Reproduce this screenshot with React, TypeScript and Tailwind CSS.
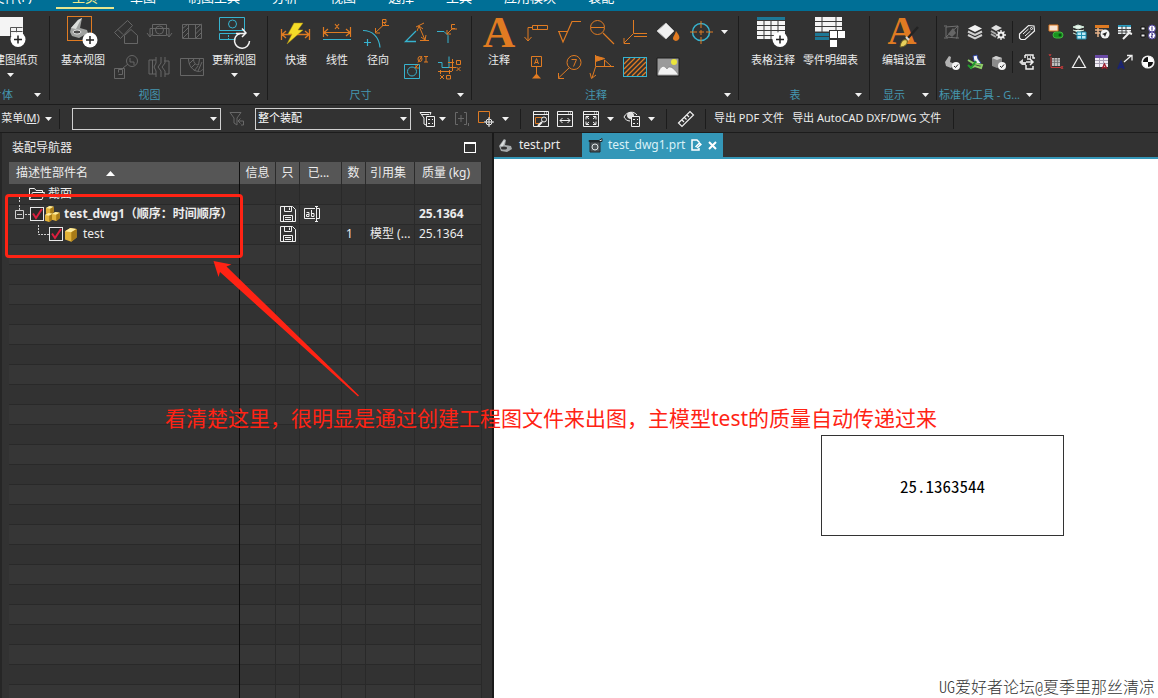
import React from "react";

const ORANGE = "#e07b22";
const TEAL = "#37b3cf";
const DIM = "#666666";

interface IconProps {
  size?: number;
  color?: string;
  children: React.ReactNode;
}

const Icon: React.FC<IconProps> = ({ size = 24, color = "#f0f0f0", children }) => (
  <svg
    width={size}
    height={size}
    viewBox={`0 0 ${size} ${size}`}
    fill="none"
    stroke={color}
    className="shrink-0 overflow-visible"
    aria-hidden="true"
  >
    {children}
  </svg>
);

const Caret = () => (
  <svg width="7" height="4" viewBox="0 0 7 4" className="shrink-0" aria-hidden="true">
    <path d="M0 0h7L3.5 4z" fill="#f2f2f2" />
  </svg>
);

const PlusBadge = ({ x, y }: { x: number; y: number }) => (
  <g>
    <circle cx={x} cy={y} r="7.5" fill="#fff" stroke="none" />
    <path d={`M${x - 4} ${y}h8M${x} ${y - 4}v8`} stroke="#222" strokeWidth="1.5" />
  </g>
);

/* ---------- large ribbon icons (32px) ---------- */

const NewSheetIcon = () => (
  <Icon size={32}>
    <rect x="0" y="1" width="28" height="19" fill="#f4f4f4" stroke="none" />
    <path d="M15.5 20v-8.500h12M15.500 15.500h12M21.500 12v8" stroke="#555" />
    <PlusBadge x={23} y={23.5} />
  </Icon>
);

const BaseViewIcon = () => (
  <Icon size={32}>
    <rect x="0.5" y="0.5" width="24" height="24" stroke={ORANGE} />
    <path d="M4 12L11 4l4-2-2 10 7 2 1 3-9 5-7-2-2-4z" fill="#9fa19f" stroke="none" />
    <path d="M4 12l7-8 4-2-3 5-3 6z" fill="#dcdedb" stroke="none" />
    <ellipse cx="10" cy="16" rx="4" ry="2" fill="#4a4a4a" stroke="#e4e4e4" />
    <PlusBadge x={23} y={24} />
  </Icon>
);

const UpdateViewIcon = () => (
  <Icon size={32} color={TEAL}>
    <path d="M1.500 1.500h25v13h-25zM1.500 17.500h19M1.500 17.500v6h16M20 17.500h6.500v-1" />
    <circle cx="14.500" cy="8" r="4" />
    <path d="M10.500 19v5" strokeDasharray="2 1" />
    <path d="M22 17.500a7.500 7.500 0 1 0 9.500 7.500" stroke="#f2f2f2" strokeWidth="1.5" />
    <path d="M18 17.500h10M24 12.500l4 4.500-4 4" stroke="#f2f2f2" strokeWidth="1.5" />
  </Icon>
);

const RapidIcon = () => (
  <Icon size={32} color={ORANGE}>
    <path d="M1.500 13v11M29.500 13v11M2 18.500h27M6 15l-4 3.500L6 22M25 15l4 3.500-4 3.500" strokeWidth="1.3" />
    <path d="M14 7h9l-5 7h5L7 28l5-10H8z" fill="#f4dc28" stroke="#a88a12" strokeWidth="0.5" />
  </Icon>
);

const LinearIcon = () => (
  <Icon size={32} color={ORANGE}>
    <path d="M2.500 11v10M29.500 11v10M3 16.500h26M7 13l-4 3.500L7 20M25 13l4 3.500-4 3.500M14 8l4 5M18 8l-4 5" strokeWidth="1.2" />
    <path d="M2 23.500h28" stroke={TEAL} />
  </Icon>
);

const RadialIcon = () => (
  <Icon size={32} color={ORANGE}>
    <path d="M1 14.500c9 0 16 6 17 17M2 26.500h7M5.500 23v7" stroke={TEAL} strokeWidth="1.2" />
    <path d="M13 17l8-7.500h6M13.500 12v5H18" />
    <path d="M20.500 10V3.500H24v3h-3.500M22 6.500l2.500 3.500" />
  </Icon>
);

const NoteIcon = () => (
  <Icon size={32}>
    <text
      x="16"
      y="31"
      textAnchor="middle"
      fontFamily="Liberation Serif, serif"
      fontWeight="700"
      fontSize="45"
      fill={ORANGE}
      stroke="none"
    >
      A
    </text>
  </Icon>
);

const TabularNoteIcon = () => (
  <Icon size={32}>
    <path d="M0 1h28v3H0z" fill="#1d7896" stroke="none" />
    <path d="M0 4h28v19H0z" fill="#f4f4f4" stroke="none" />
    <path d="M0 4.500h28M0 9.500h28M0 14.500h28M0 19.500h28M7 4v19M14 4v19M21 4v19" stroke="#3a3a3a" />
    <PlusBadge x={23} y={23.5} />
  </Icon>
);

const PartsListIcon = () => (
  <Icon size={32}>
    <path d="M0 1h27v15H0z" fill="#f4f4f4" stroke="none" />
    <path d="M0 17h27v7H0z" fill="#1d7896" stroke="none" />
    <path d="M0 5.500h27M0 10.500h27M0 16h27M0 20.500h27M7 1v15M21 1v15" stroke="#3a3a3a" />
    <path d="M14 14h17v10h-8v8h-9z" fill="#323232" stroke="none" />
    <path d="M15 15h7v7h-7zM23 15h7v7h-7zM15 24h7v7h-7z" fill="#fff" stroke="none" />
  </Icon>
);

const EditSettingsIcon = () => (
  <Icon size={32}>
    <text x="14" y="28" textAnchor="middle" fontFamily="Liberation Serif, serif" fontWeight="700" fontSize="40" fill={ORANGE} stroke="none">
      A
    </text>
    <path d="M30 11L19 23" stroke="#232323" strokeWidth="2.500" />
    <path d="M12 31c1-6 3-8 7-7 1 3-1 7-7 7z" fill="#e6cf5c" stroke="#6e6225" />
    <path d="M18 21l3 3" stroke="#d8d8d8" strokeWidth="2" />
  </Icon>
);

/* ---------- small ribbon icons (24px) ---------- */

const viewIcons: [string, React.ReactNode][] = [
  ["投影视图", (
    <Icon color={DIM}>
      <path d="M.5 12.500l13-12 5 5-12 13zM4 9.500l5 5M10.500 23.500v-8l6.500-6 6.500 6v8z" />
    </Icon>
  )],
  ["局部放大", (
    <Icon color={DIM}>
      <path d="M5.500 4.500h14v11h-14zM3 8.500h19M3 8.500v8M0 13l3 4 3-4M22 8.500v8M19 13l3 4 3-4" />
      <circle cx="12.500" cy="10" r="4" />
    </Icon>
  )],
  ["剖视图", (
    <Icon color={DIM}>
      <path d="M2.500 4.500h19v14h-19zM8.500 4.500v14M15.500 4.500v14M2 9l6-5M2 14l6-6M3 18l5-5M15.500 9l6-5M15.500 14l6-6M16 18l5-5" />
    </Icon>
  )],
  ["局部视图", (
    <Icon color={DIM}>
      <circle cx="18" cy="6" r="5.500" />
      <path d="M.5 13.500h10v10H.500zM4.500 17.500v-3h4v5h-4M9 13l5-4M16 3v4h4v3" />
    </Icon>
  )],
  ["断开视图", (
    <Icon color={DIM}>
      <path d="M9 2v6l-2 4 2 4v6M9 5H2v14h7M5.500 5v14M14 2v6l-3 4 3 4v6M18 2v6l-3 4 3 4v6M17 6h5v13h-4" />
    </Icon>
  )],
  ["局部剖", (
    <Icon color={DIM}>
      <path d="M.5 3.500h23v17H.500zM8.500 3.500c0 7 4 13 11 13 2 0 2-2 4-2M13.500 4c0 4 2 6 5 6l1-6M9 9l4-4M11 13l4-4M14 16l4-5M18 16l4-9" />
    </Icon>
  )],
];

const dimensionIcons: [string, React.ReactNode][] = [
  ["角度", (
    <Icon color={ORANGE}>
      <path d="M12 11L1.500 21.500H12" stroke={TEAL} strokeWidth="1.3" />
      <path d="M12 7l8-4M15 6l6 14M13 11l2-5 4 3M17 17l4 3 1-5M16 20.500h9" />
    </Icon>
  )],
  ["倒斜角", (
    <Icon color={ORANGE}>
      <path d="M0 11.500h7l4 4V23" stroke={TEAL} />
      <path d="M10 14l5-5h5M10 10v4h4M18 4.500h-3.500v4H18" />
    </Icon>
  )],
  ["孔标注", (
    <Icon color={ORANGE}>
      <path d="M.5 9.500h15v14H.500z" stroke={TEAL} />
      <circle cx="8" cy="16.500" r="4.500" stroke={TEAL} />
      <path d="M11 13l4-4M14 7.500L18 1M20 1.500h4M22 1v6M20 7h4M12 10v3h3" />
      <ellipse cx="16" cy="4" rx="2" ry="2.500" />
    </Icon>
  )],
  ["坐标", (
    <Icon color={ORANGE}>
      <path d="M1 7.500h4v5h7V1.500" stroke={TEAL} />
      <path d="M11 7.500h6M15.500 4v12M12 12.500h7M3.500 15v4M12.500 15v4M1 16.500h14M19.500 5.500h4v4h-4zM19.500 12l4 4M23.500 12l-4 4M3 20l4 4M7 20l-4 4M9.500 20.500h4v3.500h-4z" />
    </Icon>
  )],
];

const annotationIcons: [string, React.ReactNode][] = [
  ["特征控制框", (
    <Icon color={ORANGE}>
      <path d="M8.500 5.500h15v4h-15zM13.500 5.500v4M8 7.500H4v13M.500 17l3.500 4 3.500-4" />
    </Icon>
  )],
  ["表面粗糙度", (
    <Icon color={ORANGE}>
      <path d="M1 11.500h10M2 12l4 10 9-20.500h9" strokeWidth="1.2" />
    </Icon>
  )],
  ["剖切线", (
    <Icon color={ORANGE}>
      <circle cx="7.500" cy="7.500" r="7" />
      <path d="M1 7.500h13M13 13l11 11" strokeWidth="1.2" />
    </Icon>
  )],
  ["相交符号", (
    <Icon color={ORANGE}>
      <path d="M10.500 0v13.500H24M11 16.500h13M10 14L1 23M1 18v5.500h6" />
    </Icon>
  )],
  ["填充", (
    <Icon>
      <path d="M1 11l9-8 8 8-8 8z" fill="#f0f0f0" stroke="#bdbdbd" />
      <path d="M20 11c3 4 4 6 3 8-2 3-5 2-6 0 0-3 2-4 3-8z" fill={ORANGE} stroke="none" />
    </Icon>
  )],
  ["中心标记", (
    <Icon color={ORANGE}>
      <circle cx="12" cy="12" r="8.500" stroke={TEAL} strokeWidth="1.500" />
      <path d="M12 1v7M12 10v5M12 17v7M1 12h7M10 12h5M17 12h7" />
    </Icon>
  )],
  ["基准特征", (
    <Icon color={ORANGE}>
      <path d="M7.500 1.500h10v10h-10zM12.500 11.500V20M10.500 9l2-5.500 2 5.500M11 7.500h3" />
      <path d="M8 23.500l4.500-5 4.500 5z" fill={ORANGE} stroke="none" />
    </Icon>
  )],
  ["符号标注", (
    <Icon color={ORANGE}>
      <circle cx="17" cy="7.500" r="7" />
      <path d="M14.500 4.500h5l-3 7M12 13L1.500 23M1.500 18v5.500H7" />
    </Icon>
  )],
  ["焊接符号", (
    <Icon color={ORANGE}>
      <path d="M5.500 0v11.500H24M5.500 12L2 23M0 18l1.500 5.500L6 20M14.500 11V5l7 6.500" />
      <path d="M5.500 1l9 2.500-9 3z" fill={ORANGE} />
    </Icon>
  )],
  ["剖面线", (
    <Icon color={ORANGE}>
      <path d="M1 9l6-6M1 14L12 3M1 19L17 3M4 21L22 3M9 21L23 7M14 21l9-9M19 21l4-4" strokeWidth="1.300" />
      <rect x="0.500" y="2.500" width="23" height="19" stroke={TEAL} />
    </Icon>
  )],
  ["图像", (
    <Icon>
      <path d="M1 3h22v18H1z" fill="#9a9a9a" stroke="#1d1d1d" />
      <path d="M2 18c3-8 6-8 9-4 2-4 6-2 11 5v1H2z" fill="#f2f2f2" stroke="#777" strokeWidth="0.600" />
      <circle cx="18" cy="7" r="3" fill="#ece63c" stroke="none" />
    </Icon>
  )],
];

/* ---------- 16px icons ---------- */

const CheckDot = () => (
  <g>
    <circle cx="12" cy="12" r="4" fill="#f4f4f4" stroke="none" />
    <path d="M10 12l1.500 1.500 2.500-3" stroke="#222" />
  </g>
);

const standardIcons: [string, React.ReactNode][] = [
  ["草图", (
    <Icon size={16} color="#707070">
      <path d="M2 3l12-1-1 12-11-1zM2 13L14 2M0 2h3M0 14h4M12 14h3" />
      <path d="M4 10l5-6 3 5-4 4z" fill="#666" stroke="none" />
    </Icon>
  )],
  ["图层", (
    <Icon size={16}>
      <path d="M1 4.500L8 1l7 3.500L8 8z" fill="#f2f2f2" stroke="none" />
      <path d="M1 7.500l7 3.500 7-3.500M1 11l7 3.500 7-3.500" strokeWidth="2" stroke="#d0d0d0" />
    </Icon>
  )],
  ["图层设置", (
    <Icon size={16}>
      <path d="M1 4l5-3 6 3-6 3z" fill="#e0e0e0" stroke="none" />
      <path d="M1 7l5 3M1 10l5 3" strokeWidth="2" stroke="#aaa" />
      <circle cx="11" cy="11" r="2.500" strokeWidth="2" />
      <path d="M11 6v2M11 14v2M6 11h2M14 11h2M7.500 7.500l1.500 1.500M13 13l1.500 1.500M14.500 7.500L13 9M9 13l-1.500 1.500" strokeWidth="1.300" />
    </Icon>
  )],
  ["标签", (
    <Icon size={16}>
      <path d="M.500 10l9-8.500 5.500.500.500 5-9.500 8.500H2L.500 14z" strokeWidth="1.200" />
      <path d="M4 10l5.500-5M6 12l5.500-5" />
      <circle cx="12.500" cy="4.500" r="1" />
    </Icon>
  )],
  ["检查部件", (
    <Icon size={16}>
      <path d="M1 8l4-6 2 1-1 5 5 2-4 4-5-2z" fill="#b2b2b2" stroke="none" />
      <CheckDot />
    </Icon>
  )],
  ["检查工具", (
    <Icon size={16}>
      <path d="M6 2l4-1 1 4 3 4-3 1-4-3z" fill="#f4f4f4" stroke="#2a3f9c" />
      <path d="M1 6l5 3 9 2-1 3-6-2-5 2" fill="none" stroke="#8fd06a" strokeWidth="2" />
      <path d="M1 11l3 3 5-7" stroke="#1f9a2c" strokeWidth="2" />
    </Icon>
  )],
  ["检查装配", (
    <Icon size={16}>
      <path d="M2 4l4-2 6 2v8l-5 2-5-2z" fill="#8c8c8c" stroke="none" />
      <path d="M2 4l4-2 6 2-5 2z" fill="#d0d0d0" stroke="none" />
      <CheckDot />
    </Icon>
  )],
  ["导出列表", (
    <Icon size={16}>
      <path d="M6 1h8v3h2M6 1v3M14 12v3H7v-4M8 3h1M11 3h1M8 5h4" strokeWidth="1.500" />
      <path d="M0 8l4-3v3h3v3H3z" fill="#d8d8d8" stroke="none" />
      <path d="M7 8h7M11 5l3 3-3 3" strokeWidth="1.500" />
    </Icon>
  )],
];

const toolIcons: [string, React.ReactNode][] = [
  ["开关", (
    <Icon size={16}>
      <path d="M1 1h9v6H1z" fill="#f6e4d4" stroke={ORANGE} />
      <rect x="5" y="8" width="10" height="6" rx="3" fill="#18941f" stroke="#3fb43f" />
      <circle cx="12" cy="11" r="1.500" fill="#0b4a10" stroke="none" />
    </Icon>
  )],
  ["图层表", (
    <Icon size={16}>
      <path d="M2 3l5-2 6 2-6 2zM2 6l5 2 6-2M2 9l5 2" fill="#e9f6ee" stroke="#cfe8d8" />
      <path d="M6 8h9v7H6z" fill="#bdeaf6" stroke="#1b8fb0" />
      <path d="M6 11.500h9M10.500 8v7" stroke="#1b8fb0" />
    </Icon>
  )],
  ["表格导航", (
    <Icon size={16}>
      <path d="M1 1h14v3H1z" fill={ORANGE} stroke="none" />
      <path d="M1 6h8M1 9h5M4 4v9" stroke="#e8b48a" strokeWidth="1.500" />
      <circle cx="11" cy="10" r="4.500" fill="#f4f4f4" stroke="none" />
      <path d="M8 10l5-2-2 5-1-2z" fill="#222" stroke="none" />
    </Icon>
  )],
  ["表格工具", (
    <Icon size={16}>
      <path d="M1 1h13v9H1z" fill="#e9eef0" stroke="none" />
      <path d="M1 2h13" stroke="#2d9bbd" strokeWidth="2" />
      <path d="M1 5.500h13M1 8h13M5 2v8M9 2v8" stroke="#444" />
      <path d="M6 15l6-6M11 6l1 3 3 1" strokeWidth="2" />
    </Icon>
  )],
  ["编号", (
    <Icon size={16}>
      <path d="M1 3h4v3H1zM1 10h4v3H1z" fill="#eee" stroke="#111" />
      <circle cx="12" cy="4.500" r="3.500" fill="#fff" stroke="#4a3d9a" />
      <circle cx="12" cy="11.500" r="3.500" fill="#fff" stroke="#4a3d9a" />
      <path d="M12 2.500v4M11 10h2l-2 3h2" stroke="#2c2380" />
    </Icon>
  )],
  ["坐标网格", (
    <Icon size={16}>
      <path d="M4 4h8v8H4z" fill="#bdbdbd" stroke="none" />
      <path d="M4 6h8M4 8.500h8M6.500 4v8M9.500 4v8" stroke="#666" strokeWidth="0.700" />
      <path d="M3 3v10.500h10M1 0l1 2 1-2M13 12l2 3M15 12l-2 3" stroke="#c43a3a" />
    </Icon>
  )],
  ["三角", (
    <Icon size={16}>
      <path d="M8 2L1.500 13.500h13z" strokeWidth="1.200" />
    </Icon>
  )],
  ["表格标记", (
    <Icon size={16}>
      <path d="M1 1h13v12H1z" fill="#f2eef6" stroke="none" />
      <path d="M1 2.500h13" stroke="#6a4aa6" strokeWidth="3" />
      <path d="M1 6.500h13M1 9.500h13M5.500 4v9M9.500 4v9" stroke="#a8a0b4" />
      <path d="M8 15l2.500-5 2.500 5M9 13.500h3" stroke="#a01d2c" strokeWidth="1.300" />
    </Icon>
  )],
  ["文字引线", (
    <Icon size={16}>
      <path d="M7 8l7-6M10 1.500h5v5" strokeWidth="1.300" />
      <path d="M1 15l3-7 3 7M2 13h4" stroke="#1a2370" strokeWidth="2" />
    </Icon>
  )],
  ["质心", (
    <Icon size={16}>
      <circle cx="8" cy="8" r="6" fill="#fff" strokeWidth="1.200" />
      <path d="M8 8V3a5 5 0 0 0-5 5zM8 8v5a5 5 0 0 0 5-5z" fill="#111" stroke="none" />
    </Icon>
  )],
];

const FilterResetIcon = () => (
  <Icon size={16} color="#686868">
    <path d="M1 1.500h11L8 7v7l-3-2V7zM9 10h5.500v4H12M11.500 7.500L9 10l2.500 2.500" />
  </Icon>
);
const FilterListIcon = () => (
  <Icon size={16}>
    <path d="M1 1.500h11M1 1.500L5 7v6l2 1M12 1.500L11 4M3 3.500h7" />
    <path d="M7.500 5.500h8v10h-8zM9 8.500h2M9 12.500h2M13 8.500h1M13 12.500h1" />
  </Icon>
);
const ScopeIcon = () => (
  <Icon size={16} color="#686868">
    <path d="M4 1.500H1.500v12H4M10 1.500h2.500v12H10M7 4v7M4 7.500h6M14.500 12v3" />
  </Icon>
);
const SnapIcon = () => (
  <Icon size={16}>
    <path d="M11.500 7V.500h-11v11H6" stroke={ORANGE} />
    <circle cx="11" cy="11" r="3" />
    <path d="M11 6v10M6 11h10" />
  </Icon>
);
const WindowFrame = () => <path d="M.5.500h15v15H.500zM.500 3.500h15M11 2h1M13 2h1" />;
const ZoomWindowIcon = () => (
  <Icon size={16}>
    <WindowFrame />
    <path d="M9 6.500H2.500v6H7" stroke={ORANGE} />
    <circle cx="11" cy="8.500" r="2.500" />
    <path d="M9 11l-4 4" strokeWidth="2" />
  </Icon>
);
const PanIcon = () => (
  <Icon size={16}>
    <WindowFrame />
    <path d="M3 9.500h10M5.500 7L3 9.500 5.500 12M10.500 7L13 9.500 10.500 12" />
  </Icon>
);
const FitIcon = () => (
  <Icon size={16}>
    <WindowFrame />
    <path d="M3 8.500v-3h3M10 5.500h3v3M3 10.500v3h3M10 13.500h3v-3M3 5.500l3 2.500M13 5.500L10 8M3 13.500L6 11M13 13.500L10 11" />
  </Icon>
);
const ShowIcon = () => (
  <Icon size={16}>
    <path d="M0 6c3-6 10-6 13-2M0 6c1 2 3 4 6 4" />
    <circle cx="6.500" cy="4.500" r="3" fill="#ddd" />
    <path d="M7.500 5.500h8v10h-8z" fill="#323232" />
    <path d="M9 8.500h2M9 12.500h2M13 8.500h1M13 12.500h1" />
  </Icon>
);
const RulerIcon = () => (
  <Icon size={16}>
    <path d="M.5 12L12 .500 15.500 4 4 15.500zM4 9l2 2M6.500 6.500l2 2M9 4l2 2" strokeWidth="1.200" />
  </Icon>
);

const PartIcon = () => (
  <Icon size={16}>
    <path d="M1 9l5-7 2 1-1 5 6 1 1 3-5 3-6-1z" fill="#a6aaac" stroke="none" />
    <path d="M2 9l4-6 1 1-2 5z" fill="#dadddd" stroke="none" />
    <ellipse cx="6" cy="11" rx="3" ry="1.500" fill="#333" stroke="none" />
  </Icon>
);
const DrawingIcon = () => (
  <Icon size={16}>
    <path d="M2 5h10v10H2z" fill="#4f5558" stroke="#23292c" />
    <path d="M1 3.500h10l3-2v3H1z" fill="#dfe5e6" stroke="#23292c" />
    <circle cx="7" cy="10" r="3" stroke="#dfe5e6" />
  </Icon>
);
const FolderIcon = () => (
  <Icon size={16}>
    <path d="M.5 13.500v-11h5l1.500 2h6.500v2M.500 13.500l3-7h12l-2.500 7z" />
  </Icon>
);
const Cube = ({ x, y, s }: { x: number; y: number; s: number }) => (
  <g stroke="none" transform={`translate(${x} ${y}) scale(${s})`}>
    <path d="M0 3l5-3 6 1v8l-5 4-6-2z" fill="#e2b238" />
    <path d="M0 3l5-3 6 1-5 3z" fill="#fdeb9c" />
    <path d="M6 4l5-3v8l-5 4z" fill="#a87b17" />
  </g>
);
const AssemblyIcon = () => (
  <Icon size={16}>
    <Cube x={2} y={0} s={0.7} />
    <Cube x={1} y={7} s={0.7} />
    <Cube x={8} y={6} s={0.7} />
  </Icon>
);
const ComponentIcon = () => (
  <Icon size={16}>
    <Cube x={2} y={2} s={1.05} />
  </Icon>
);
const SaveIcon = () => (
  <Icon size={16}>
    <path d="M.5.500h12l3 3v12H.500zM4.500.500v5h7v-5M9.500 1.500v2.500M3.500 15.500v-6h9v6M5 11.500h6M5 13.500h6" />
  </Icon>
);
const RenameIcon = () => (
  <Icon size={16}>
    <path d="M11 2.500H.500v10H11M13 2.500h2.500v10H13M12.500 1v14M11 .500h3M11 15.500h3M2.500 6.500H5v4H2.500v-2H5M7.500 4v6.500H10v-3H7.500" />
  </Icon>
);

/* ---------- ribbon ---------- */

const tabs = ["主页", "草图", "制图工具", "分析", "视图", "选择", "工具", "应用模块", "装配"];

const MenuTabs = () => (
  <nav className="flex h-[11px] shrink-0 items-end overflow-hidden bg-[#006f96] pb-[2px] text-[13px] text-white">
    <button className="flex h-6 w-14 shrink-0 items-end justify-end border-b-2 border-transparent pr-6 leading-5 whitespace-nowrap">
      文件(F)
    </button>
    {tabs.map((tab, i) => (
      <button
        key={tab}
        className={
          i === 0
            ? "flex h-6 shrink-0 items-end border-b-2 border-[#e6e58f] px-4 leading-5 text-[#efe98c]"
            : "flex h-6 shrink-0 items-end border-b-2 border-transparent px-4 leading-5"
        }
      >
        {tab}
      </button>
    ))}
  </nav>
);

interface GroupProps {
  title: string;
  width: string;
  children: React.ReactNode;
}

const Group: React.FC<GroupProps> = ({ title, width, children }) => (
  <>
    <section className={`flex shrink-0 flex-col overflow-hidden pt-[5px] ${width}`}>
      <div className="flex h-[70px] items-start">{children}</div>
      <div className="flex h-[18px] items-center pr-[7px] text-[11px] text-[#4597b0]">
        <span className="flex-1 pr-1 text-center whitespace-nowrap">{title}</span>
        <Caret />
      </div>
    </section>
    <Divider />
  </>
);

const Divider = () => <div className="mt-[5px] mb-1 w-px shrink-0 bg-[#1c1c1c]" />;

interface BigButtonProps {
  label: string;
  icon: React.ReactNode;
  caret?: boolean;
  width?: string;
}

const BigButton: React.FC<BigButtonProps> = ({ label, icon, caret, width = "" }) => (
  <button className={`flex shrink-0 flex-col items-center text-[11px] leading-4 whitespace-nowrap ${width}`}>
    {icon}
    <span className="mt-1 mb-[5px]">{label}</span>
    {caret && <Caret />}
  </button>
);

const IconGrid = ({ items, className }: { items: [string, React.ReactNode][]; className: string }) => (
  <div className={`grid shrink-0 gap-y-[3px] ${className}`}>
    {items.map(([name, icon]) => (
      <button key={name} aria-label={name} className="flex h-8 w-[33px] items-center justify-center">
        {icon}
      </button>
    ))}
  </div>
);

const ToolCell = ({ item }: { item: [string, React.ReactNode] }) => (
  <button aria-label={item[0]} className="flex h-[30px] w-[23px] items-center justify-center">
    {item[1]}
  </button>
);

const Ribbon = () => (
  <div className="flex h-[93px] shrink-0 overflow-hidden">
    <section className="flex w-[49px] shrink-0 flex-col overflow-hidden pt-[5px]">
      <div className="flex h-[70px] items-start justify-end pr-[11px]">
        <BigButton label="新建图纸页" icon={<NewSheetIcon />} caret />
      </div>
      <div className="flex h-[18px] items-center justify-end gap-[21px] pr-2 text-[11px] whitespace-nowrap text-[#4597b0]">
        片体
        <Caret />
      </div>
    </section>
    <Divider />

    <Group title="视图" width="w-[217px]">
      <div className="flex gap-1 pl-[11px]">
        <BigButton label="基本视图" icon={<BaseViewIcon />} />
        <IconGrid items={viewIcons} className="grid-cols-3" />
        <BigButton label="更新视图" icon={<UpdateViewIcon />} caret />
      </div>
    </Group>

    <Group title="尺寸" width="w-[203px]">
      <div className="flex gap-px pl-2">
        <BigButton label="快速" icon={<RapidIcon />} width="w-10" />
        <BigButton label="线性" icon={<LinearIcon />} width="w-10" />
        <BigButton label="径向" icon={<RadialIcon />} width="w-10" />
        <IconGrid items={dimensionIcons} className="grid-cols-2" />
      </div>
    </Group>

    <Group title="注释" width="w-[266px]">
      <div className="flex pl-[7px]">
        <BigButton label="注释" icon={<NoteIcon />} width="w-10" />
        <IconGrid items={annotationIcons} className="grid-cols-6" />
        <button aria-label="更多注释" className="flex h-8 w-[14px] items-center justify-center">
          <Caret />
        </button>
      </div>
    </Group>

    <Group title="表" width="w-[130px]">
      <div className="flex gap-2 pl-3">
        <BigButton label="表格注释" icon={<TabularNoteIcon />} />
        <BigButton label="零件明细表" icon={<PartsListIcon />} />
      </div>
    </Group>

    <Group title="显示" width="w-[66px]">
      <div className="flex pl-3">
        <BigButton label="编辑设置" icon={<EditSettingsIcon />} />
      </div>
    </Group>

    <Group title="标准化工具 - G..." width="w-[103px]">
      <div className="grid grid-cols-[23px_23px_23px_6px_23px] pt-px pl-[3px]">
        {standardIcons.map((item, i) => (
          <React.Fragment key={item[0]}>
            {i % 4 === 3 && <div className="mx-auto my-1 w-px bg-[#1c1c1c]" />}
            <ToolCell item={item} />
          </React.Fragment>
        ))}
      </div>
    </Group>

    <div className="grid shrink-0 grid-cols-5 content-start pt-[6px] pl-[3px]">
      {toolIcons.map((item) => (
        <ToolCell key={item[0]} item={item} />
      ))}
    </div>
  </div>
);

/* ---------- selection bar ---------- */

const Picker = ({ label, value, width }: { label: string; value: string; width: string }) => (
  <div className={`relative h-[22px] shrink-0 ${width}`}>
    <select
      aria-label={label}
      defaultValue={value}
      className="h-full w-full appearance-none border border-[#d0d0d0] bg-[#323232] pl-[2px] text-[11px] text-white"
    >
      <option value={value}>{value}</option>
    </select>
    <div className="pointer-events-none absolute inset-y-0 right-1 flex items-center">
      <Caret />
    </div>
  </div>
);

interface BarButtonProps {
  label: string;
  caret?: boolean;
  gap?: string;
  children: React.ReactNode;
}

const BarButton: React.FC<BarButtonProps> = ({ label, caret, gap = "gap-2", children }) => (
  <button aria-label={label} className={`flex shrink-0 items-center ${gap}`}>
    {children}
    {caret && <Caret />}
  </button>
);

const BarDivider = () => <div className="h-5 w-px shrink-0 bg-[#1c1c1c]" />;

const SelectionBar = () => (
  <div className="flex h-7 shrink-0 items-center overflow-hidden border-t border-[#1c1c1c] text-[11px] whitespace-nowrap">
    <button className="flex w-[59px] shrink-0 items-center gap-1">
      <span className="w-[41px]">
        菜单(<u>M</u>)
      </span>
      <Caret />
    </button>
    <BarDivider />
    <div className="flex items-center gap-2 pr-[11px] pl-3">
      <Picker label="类型过滤器" value="" width="w-[149px]" />
      <BarButton label="重置过滤器"><FilterResetIcon /></BarButton>
      <div className="pl-[2px]">
        <Picker label="选择范围" value="整个装配" width="w-[156px]" />
      </div>
      <BarButton label="常规选择过滤器" caret gap="gap-1"><FilterListIcon /></BarButton>
      <BarButton label="选择组"><ScopeIcon /></BarButton>
      <BarButton label="捕捉点" caret><SnapIcon /></BarButton>
    </div>
    <BarDivider />
    <div className="flex items-center gap-2 pr-[11px] pl-3">
      <BarButton label="缩放窗口"><ZoomWindowIcon /></BarButton>
      <BarButton label="平移"><PanIcon /></BarButton>
      <div className="flex gap-[10px] pl-[2px]">
        <BarButton label="适合窗口" caret><FitIcon /></BarButton>
        <BarButton label="显示和隐藏" caret><ShowIcon /></BarButton>
      </div>
    </div>
    <BarDivider />
    <div className="px-[11px]">
      <BarButton label="测量"><RulerIcon /></BarButton>
    </div>
    <BarDivider />
    <div className="flex gap-2 pr-3 pl-2">
      <button>导出 PDF 文件</button>
      <button>导出 AutoCAD DXF/DWG 文件</button>
    </div>
    <BarDivider />
  </div>
);

/* ---------- assembly navigator ---------- */

const PartCheck = ({ id }: { id: string }) => (
  <span className="relative h-[14px] w-[14px] shrink-0">
    <input
      id={id}
      type="checkbox"
      defaultChecked
      className="block h-[14px] w-[14px] appearance-none border border-[#e8e8e8] bg-[#2a2a2a]"
    />
    <svg className="pointer-events-none absolute inset-0" width="14" height="14" viewBox="0 0 14 14" fill="none">
      <path d="M3 6.500l3 4.500 6-9" stroke="#dc1f3f" strokeWidth="2" />
    </svg>
  </span>
);

const TreeLines = ({ width, children }: { width: number; children: React.ReactNode }) => (
  <svg width={width} height="19" viewBox={`0 0 ${width} 19`} fill="none" stroke="#cfcfcf" className="shrink-0">
    {children}
  </svg>
);

const columns = ["描述性部件名", "信息", "只", "已...", "数", "引用集", "质量 (kg)"];

const rows: React.ReactNode[][] = [
  [
    <div className="flex h-[19px] items-center">
      <TreeLines width={20}>
        <path d="M10.500 13v6" strokeDasharray="2 1" />
      </TreeLines>
      <FolderIcon />
      <span className="pl-[3px]">截面</span>
    </div>,
  ],
  [
    <div className="flex h-[19px] items-center font-bold">
      <TreeLines width={21}>
        <path d="M10.500 0v5M16 9.500h5" strokeDasharray="2 1" />
        <path d="M6.500 5.500h8v8h-8zM8 9.500h5" />
      </TreeLines>
      <PartCheck id="part-dwg1" />
      <AssemblyIcon />
      <label htmlFor="part-dwg1" className="pl-1">
        test_dwg1（顺序：时间顺序）
      </label>
    </div>,
    null,
    <SaveIcon />,
    <RenameIcon />,
    null,
    null,
    <b>25.1364</b>,
  ],
  [
    <div className="flex h-[19px] items-center">
      <TreeLines width={40}>
        <path d="M29.500 0v9.500H40" strokeDasharray="2 1" />
      </TreeLines>
      <PartCheck id="part-test" />
      <ComponentIcon />
      <label htmlFor="part-test" className="pl-1">
        test
      </label>
    </div>,
    null,
    <SaveIcon />,
    null,
    "1",
    "模型 (...",
    "25.1364",
  ],
  ...Array.from({ length: 23 }, () => []),
];

const Navigator = () => (
  <aside className="flex w-[494px] shrink-0 flex-col overflow-hidden border-r-2 border-l-2 border-r-[#1a1a1a] border-l-[#262626] pr-[10px] pl-[7px]">
    <header className="flex h-[29px] shrink-0 items-center justify-between pr-[6px] pl-[3px] text-[12px]">
      <h2>装配导航器</h2>
      <button aria-label="最大化" className="h-[11px] w-3 border border-t-2 border-white" />
    </header>
    <table className="w-full table-fixed border-collapse text-[12px] leading-4 whitespace-nowrap">
      <colgroup>
        <col />
        <col className="w-[36px]" />
        <col className="w-[24px]" />
        <col className="w-[42px]" />
        <col className="w-[24px]" />
        <col className="w-[49px]" />
        <col className="w-[67px]" />
      </colgroup>
      <thead>
        <tr className="h-[22px] bg-[#565656]">
          {columns.map((name, i) => (
            <th
              key={name}
              className={
                i === 0
                  ? "border-r border-[#111] p-0 pl-[7px] text-left font-normal"
                  : "border-r border-[#2b2b2b] p-0 pr-1 text-center font-normal first:pr-0 nth-2:pr-0 nth-3:pr-0 nth-5:pr-0"
              }
            >
              {i === 0 ? (
                <span className="flex items-center gap-[18px]">
                  {name}
                  <svg width="9" height="5" viewBox="0 0 9 5" aria-hidden="true">
                    <path d="M0 5h9L4.500 0z" fill="#fff" />
                  </svg>
                </span>
              ) : (
                name
              )}
            </th>
          ))}
        </tr>
      </thead>
      <tbody>
        {rows.map((cells, r) => (
          <tr key={r} className="h-5 border-b border-[#292929] odd:bg-[#323232] even:bg-[#363636]">
            {columns.map((name, i) => (
              <td
                key={name}
                className={
                  i === 0
                    ? "overflow-hidden border-r border-[#0c0c0c] p-0"
                    : "overflow-hidden border-r border-[#292929] p-0 pl-1"
                }
              >
                {cells[i]}
              </td>
            ))}
          </tr>
        ))}
      </tbody>
    </table>
  </aside>
);

/* ---------- document area ---------- */

const DocumentArea = () => (
  <main className="flex min-w-0 flex-1 flex-col">
    <div className="flex h-[26px] shrink-0 border-b-2 border-[#3497b8] text-[12px]">
      <button className="flex w-[88px] items-center gap-1 pl-1">
        <PartIcon />
        <span className="pl-px">test.prt</span>
      </button>
      <div className="flex items-center gap-[6px] bg-[#3497b8] px-[6px] text-[#d9f1f7]">
        <button className="flex items-center gap-1">
          <DrawingIcon />
          test_dwg1.prt
        </button>
        <svg width="11" height="12" viewBox="0 0 11 12" fill="none" stroke="#fff" strokeWidth="1.500" aria-hidden="true">
          <path d="M8 3.500V3L6 1H1v10h7V9M4.500 8l4-4 1.500 1.500-4 3.500" />
        </svg>
        <button aria-label="关闭">
          <svg width="9" height="9" viewBox="0 0 9 9" stroke="#fff" strokeWidth="2">
            <path d="M1 1l7 7M8 1L1 8" />
          </svg>
        </button>
      </div>
    </div>
    <div className="relative flex-1 bg-white font-['Noto_Sans_CJK_SC',sans-serif] [font-feature-settings:'hwid']">
      <div className="absolute top-[276px] left-[327px] flex h-[101px] w-[243px] items-center justify-center border border-[#333] text-[17px] text-black">
        25.1363544
      </div>
      <p className="absolute right-[3px] bottom-0 text-[16px] leading-6 font-light whitespace-nowrap text-[#333]">
        UG爱好者论坛@夏季里那丝清凉
      </p>
    </div>
  </main>
);

/* red marks drawn over both panes */
const Annotations = () => (
  <div className="pointer-events-none absolute inset-0 text-[#ff2314]">
    <div className="absolute top-[61px] left-[5px] h-16 w-[238px] rounded-[4px] border-3 border-current" />
    <svg className="absolute top-[127px] left-[213px]" width="148" height="138" viewBox="0 0 148 138">
      <path d="M.5 1l18 3.500-5 2L146 135.500l-1 1L7 12l-1.500 5z" fill="currentColor" />
    </svg>
    <p className="absolute top-[270px] left-[165px] text-[21px] leading-[30px] whitespace-nowrap">
      看清楚这里，很明显是通过创建工程图文件来出图，主模型test的质量自动传递过来
    </p>
  </div>
);

export default function App() {
  return (
    <div
      lang="zh-CN"
      className="flex h-screen flex-col overflow-hidden bg-[#323232] font-['Noto_Sans','Noto_Sans_CJK_SC',sans-serif] text-[#ececec]"
    >
      <MenuTabs />
      <Ribbon />
      <SelectionBar />
      <div className="relative flex min-h-0 flex-1 border-t border-[#1c1c1c]">
        <Navigator />
        <DocumentArea />
        <Annotations />
      </div>
    </div>
  );
}
